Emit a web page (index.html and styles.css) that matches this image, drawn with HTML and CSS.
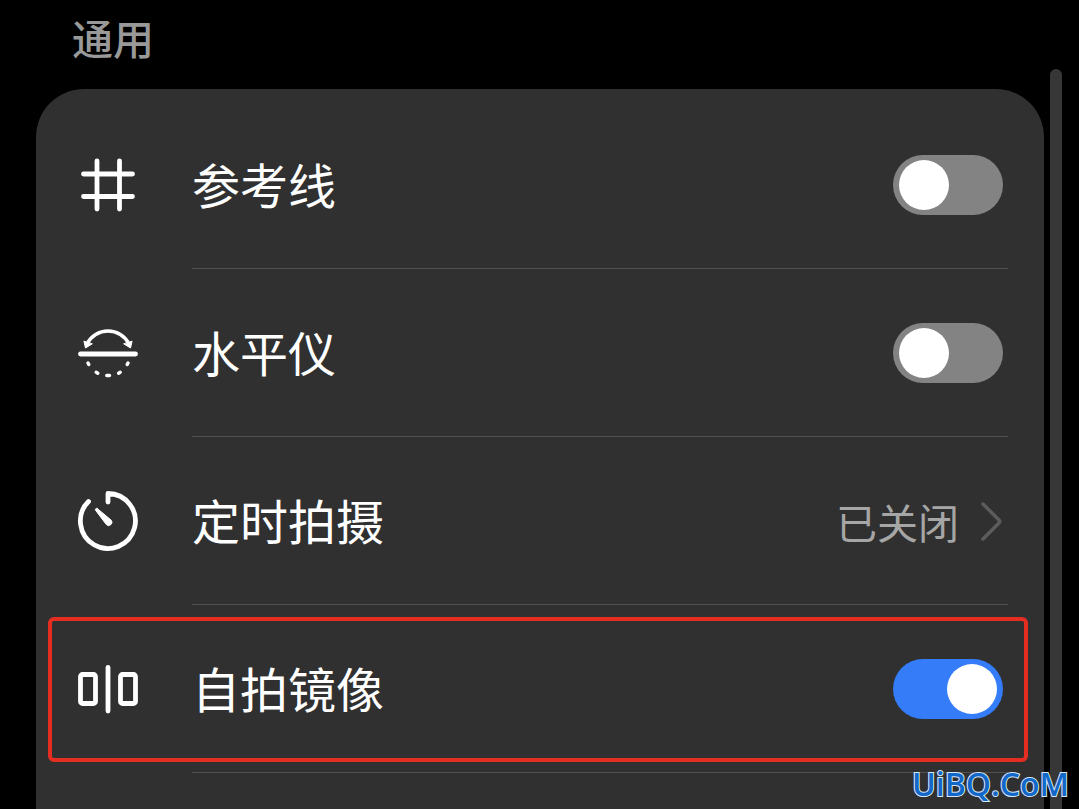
FILE: index.html
```html
<!DOCTYPE html>
<html lang="zh-CN">
<head>
  <meta charset="UTF-8">
  <meta name="viewport" content="width=device-width, initial-scale=1.0">
  <title>通用</title>
  <link rel="stylesheet" href="styles.css">
</head>
<body>
  <div class="screen">
    <main class="settings">
      <h1>通用</h1>
      <ul class="panel">
        <li class="row">
          <svg class="icon" viewBox="0 0 60 60" aria-hidden="true">
            <path d="M19 6V54M41.500 6V54M5.500 19H54.500M5.500 41.500H54.500" />
          </svg>
          <div class="content">
            <label for="grid">参考线</label>
            <input class="switch" type="checkbox" id="grid">
          </div>
        </li>
        <li class="row">
          <svg class="icon" viewBox="0 0 60 60" aria-hidden="true">
            <path d="M2.500 31H57.500" />
            <path class="thin" d="M9 21A23.500 23.500 0 0 1 51 21" />
            <path class="solid" d="M6 18.500L7.500 25L14 21ZM54 18.500L52.500 25L46 21Z" />
            <path class="thin" d="M10 40L10.800 41.500M18.200 49.300L19.800 50.200M28.800 52.500H31.500M40.600 50.200L42.200 49.300M49.200 41.500L50 40" />
          </svg>
          <div class="content">
            <label for="level">水平仪</label>
            <input class="switch" type="checkbox" id="level">
          </div>
        </li>
        <li class="row">
          <svg class="icon" viewBox="0 0 60 60" aria-hidden="true">
            <path d="M10.500 10.500A27.500 27.500 0 1 0 30 2.500V11" />
            <path class="solid" d="M19.200 17.500L33 29A3.200 3.200 0 0 1 28.300 33.500L17.500 19.200A1.300 1.300 0 0 1 19.200 17.500Z" />
          </svg>
          <div class="content">
            <label for="timer">定时拍摄</label>
            <button class="value" type="button" id="timer">
              已关闭
              <svg class="arrow" viewBox="0 0 24 42" aria-hidden="true">
                <path d="M4 4L20 20Q21.500 21.500 20 23L4 39" />
              </svg>
            </button>
          </div>
        </li>
        <li class="row marked">
          <svg class="icon" viewBox="0 0 60 60" aria-hidden="true">
            <path d="M30 8.500V52" />
            <rect x="2.500" y="15.500" width="15" height="29" rx="2" />
            <rect x="42.500" y="15.500" width="15" height="29" rx="2" />
          </svg>
          <div class="content">
            <label for="mirror">自拍镜像</label>
            <input class="switch" type="checkbox" id="mirror" checked>
          </div>
        </li>
      </ul>
    </main>
    <div class="scrollbar"></div>
    <p class="watermark">UiBQ.CoM</p>
  </div>
</body>
</html>
```

FILE: styles.css
```css
:root {
  --bg-color: #000;
  --panel-color: #303030;
  --line-color: #505050;
  --muted-color: #999;
  --accent-color: #347cf8;
  --mark-color: #e62d22;
}

* {
  box-sizing: border-box;
}

body {
  margin: 0;
  color: #fff;
  background-color: var(--bg-color);
  font-family: "Noto Sans CJK SC", sans-serif;
}

.screen {
  position: relative;
  display: flex;
  gap: 6px;
  height: 100vh;
  padding: 0 17px 0 36px;
  overflow: hidden;
}

.settings {
  display: flex;
  flex: 1;
  flex-direction: column;
}

h1 {
  margin: 0;
  padding: 7px 36px 22px;
  color: var(--muted-color);
  font-size: 41px;
  font-weight: 500;
  line-height: 60px;
}

.panel {
  flex: 1;
  margin: 0;
  padding: 12px 36px 0 42px;
  list-style: none;
  background-color: var(--panel-color);
  border-radius: 48px 48px 0 0;
}

.row {
  position: relative;
  display: flex;
  align-items: center;
  gap: 54px;
}

.icon {
  flex: none;
  width: 60px;
  height: 60px;
  fill: none;
  stroke: #fff;
  stroke-width: 4.8;
  stroke-linecap: round;
  stroke-linejoin: round;
  overflow: visible;
}

.icon .thin {
  stroke-width: 3.5;
}

.icon .solid {
  fill: #fff;
  stroke-width: 1;
}

.content {
  display: flex;
  flex: 1;
  align-items: center;
  justify-content: space-between;
  height: 168px;
  padding-right: 5px;
  border-bottom: 1px solid var(--line-color);
}

label {
  padding-bottom: 4px;
  font-size: 48px;
  line-height: 72px;
}

.switch {
  appearance: none;
  display: flex;
  width: 110px;
  height: 60px;
  margin: 0;
  padding: 5px 6px;
  background-color: #838383;
  border-radius: 30px;
}

.switch::before {
  content: "";
  width: 50px;
  height: 50px;
  background-color: #fff;
  border-radius: 50%;
}

.switch:checked {
  justify-content: flex-end;
  background-color: var(--accent-color);
}

.value {
  display: flex;
  align-items: center;
  gap: 20px;
  padding: 0;
  color: #a6a6a6;
  font-family: inherit;
  font-size: 41px;
  line-height: 60px;
  background: none;
  border: 0;
}

.arrow {
  width: 24px;
  height: 42px;
  fill: none;
  stroke: #5c5c5c;
  stroke-width: 3.5;
  stroke-linecap: round;
}

/* red frame round the mirror setting */
.marked::after {
  content: "";
  position: absolute;
  inset: 12px -20px 11px -30px;
  border: 4px solid var(--mark-color);
  border-radius: 6px;
  pointer-events: none;
}

.scrollbar {
  width: 12px;
  margin-top: 69px;
  background-color: #373737;
  border-radius: 6px 6px 0 0;
}

.watermark {
  position: absolute;
  right: 10px;
  bottom: 5px;
  margin: 0;
  color: #1268c8;
  font-family: "Open Sans", sans-serif;
  font-size: 32px;
  font-weight: 600;
  line-height: 40px;
  -webkit-text-stroke: 2px #d8e8fa;
  paint-order: stroke fill;
}
```
